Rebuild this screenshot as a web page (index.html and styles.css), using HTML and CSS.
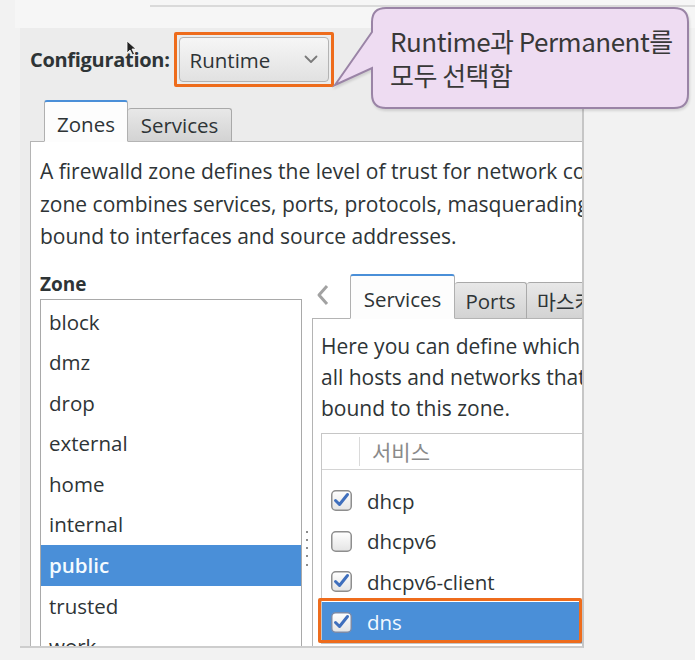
FILE: index.html
```html
<!DOCTYPE html>
<html>
<head>
<meta charset="utf-8">
<link rel="stylesheet" href="styles.css">
</head>
<body>
<div class="page">
  <div class="topstrip"><div class="topline"></div></div>
  <div class="window">
    <div class="config">
      <span class="config-label">Configuration:</span>
      <div class="hl">
        <div class="combo">
          <span>Runtime</span>
          <svg class="chev" width="14" height="9" viewBox="0 0 14 9"><path d="M1.5 1.5 L7 7 L12.5 1.5" fill="none" stroke="#7a7a7a" stroke-width="1.8" stroke-linecap="round" stroke-linejoin="round"/></svg>
        </div>
      </div>
    </div>
    <div class="tabs">
      <div class="tab active">Zones</div>
      <div class="tab">Services</div>
    </div>
    <div class="panel">
      <div class="desc">A firewalld zone defines the level of trust for network connections, interfaces and source addresses bound to the zone. The<br>zone combines services, ports, protocols, masquerading, port/packet forwarding, icmp filters and rich rules. The zone can be<br>bound to interfaces and source addresses.</div>
      <div class="lower">
        <div class="zonecol">
          <div class="zone-label">Zone</div>
          <div class="zonelist">
            <div class="zitem">block</div>
            <div class="zitem">dmz</div>
            <div class="zitem">drop</div>
            <div class="zitem">external</div>
            <div class="zitem">home</div>
            <div class="zitem">internal</div>
            <div class="zitem selected">public</div>
            <div class="zitem">trusted</div>
            <div class="zitem">work</div>
          </div>
        </div>
        <div class="handle"><i></i><i></i><i></i><i></i><i></i></div>
        <div class="rightcol">
          <div class="rtabs">
            <div class="arrow"><svg width="18" height="24" viewBox="0 0 18 24"><path d="M13 3 L5 12 L13 21" fill="none" stroke="#a2a2a2" stroke-width="3" stroke-linejoin="round"/></svg></div>
            <div class="tab active rt-services">Services</div>
            <div class="tab rt-ports">Ports</div>
            <div class="tab rt-masq">마스커레이딩</div>
          </div>
          <div class="rpanel">
            <div class="rdesc">Here you can define which services are trusted in the zone. Trusted services are accessible from<br>all hosts and networks that can reach the machine from connections, interfaces and sources<br>bound to this zone.</div>
            <div class="table">
              <div class="thead"><div class="thcheck"></div><div class="th">서비스</div></div>
              <div class="tbody">
                <div class="row">
                  <svg class="cb" width="21" height="21" viewBox="0 0 21 21"><rect x="0.75" y="0.75" width="19.5" height="19.5" rx="4" fill="url(#g)" stroke="#8e8e8e" stroke-width="1.5"/><path d="M4.5 10.5 L8.5 14.5 L16.5 4.5" fill="none" stroke="#3f6fbd" stroke-width="3" stroke-linecap="round" stroke-linejoin="round"/></svg>
                  <span>dhcp</span>
                </div>
                <div class="row">
                  <svg class="cb" width="21" height="21" viewBox="0 0 21 21"><rect x="0.75" y="0.75" width="19.5" height="19.5" rx="4" fill="url(#g)" stroke="#8e8e8e" stroke-width="1.5"/></svg>
                  <span>dhcpv6</span>
                </div>
                <div class="row">
                  <svg class="cb" width="21" height="21" viewBox="0 0 21 21"><rect x="0.75" y="0.75" width="19.5" height="19.5" rx="4" fill="url(#g)" stroke="#8e8e8e" stroke-width="1.5"/><path d="M4.5 10.5 L8.5 14.5 L16.5 4.5" fill="none" stroke="#3f6fbd" stroke-width="3" stroke-linecap="round" stroke-linejoin="round"/></svg>
                  <span>dhcpv6-client</span>
                </div>
                <div class="row selected">
                  <svg class="cb" width="21" height="21" viewBox="0 0 21 21"><rect x="0.75" y="0.75" width="19.5" height="19.5" rx="4" fill="url(#g)" stroke="#7a8aa8" stroke-width="1.5"/><path d="M4.5 10.5 L8.5 14.5 L16.5 4.5" fill="none" stroke="#3f6fbd" stroke-width="3" stroke-linecap="round" stroke-linejoin="round"/></svg>
                  <span>dns</span>
                </div>
              </div>
            </div>
          </div>
        </div>
      </div>
    </div>
  </div>
  <svg class="defs" width="0" height="0"><defs><linearGradient id="g" x1="0" y1="0" x2="0" y2="1"><stop offset="0" stop-color="#ffffff"/><stop offset="1" stop-color="#e4e4e4"/></linearGradient></defs></svg>
  <svg class="callout" width="365" height="112" viewBox="0 0 365 112"><path d="M56 3 H344 Q358 3 358 17 V89 Q358 103 344 103 H56 Q42 103 42 89 V63 L5 80 L42 27 V17 Q42 3 56 3 Z" fill="#eedcf2" stroke="#9a84a6" stroke-width="2"/></svg>
  <div class="callout-text">Runtime과 Permanent를<br>모두 선택함</div>
  <svg class="cursor" width="12" height="16" viewBox="0 0 12 16"><path d="M1 1 L1 13 L4 10 L6.5 15 L8.5 14 L6 9 L10 9 Z" fill="#222" stroke="#fff" stroke-width="0.8"/></svg>
</div>
</body>
</html>
```
FILE: styles.css
```css
* { box-sizing: border-box; }
html, body { margin: 0; padding: 0; }
body {
  background: #f2f2f2;
  font-family: "Open Sans", "Noto Sans", "Noto Sans CJK KR", sans-serif;
  color: #2e3436;
}
.page {
  position: relative;
  width: 695px;
  height: 660px;
  overflow: hidden;
  background: #f2f2f2;
}
.topstrip {
  height: 28px;
  margin-left: 15px;
  background: #f6f6f6;
  padding-top: 5px;
}
.topline {
  margin-left: 135px;
  height: 2px;
  background: #dadada;
}
.window {
  margin-left: 20px;
  width: 564px;
  height: 620px;
  background: #ececec;
  border-right: 2px solid #c6c6c6;
  border-bottom: 2px solid #cdcdcd;
  display: flex;
  flex-direction: column;
  overflow: hidden;
}
.config {
  height: 72px;
  flex: none;
  display: flex;
  align-items: flex-start;
  padding: 4px 0 0 10px;
}
.config-label {
  font-weight: 700;
  font-size: 20px;
  line-height: 55px;
  margin-right: 4px;
  letter-spacing: -0.3px;
  white-space: nowrap;
}
.hl {
  border: 3px solid #ee6c1c;
  border-radius: 2px;
  padding: 2px;
  flex: none;
}
.combo {
  width: 150px;
  height: 45px;
  border: 1px solid #b3b3b3;
  border-radius: 4px;
  background: linear-gradient(#f6f6f6, #e1e1e1);
  display: flex;
  align-items: center;
  justify-content: space-between;
  padding: 0 10px 0 10px;
  font-size: 20.5px;
}
.tabs {
  height: 42px;
  flex: none;
  display: flex;
  align-items: flex-end;
  padding-left: 24px;
  margin-bottom: -1px;
  position: relative;
  z-index: 1;
}
.tab {
  display: flex;
  align-items: center;
  justify-content: center;
  font-size: 20.5px;
  height: 34px;
  border: 1px solid #a9a9a9;
  border-bottom: 1px solid #b4b4b4;
  border-radius: 3px 3px 0 0;
  background: linear-gradient(#e8e8e8, #d3d3d3);
  white-space: nowrap;
  overflow: hidden;
}
.tab.active {
  height: 42px;
  background: #fdfdfd;
  border-color: #b0b0b0;
  border-top: 2px solid #4a8fd8;
  border-bottom: 1px solid #fdfdfd;
  padding-top: 4px;
}
.tabs .tab:nth-child(1) { width: 84px; }
.tabs .tab:nth-child(2) { width: 104px; border-left: none; }
.panel {
  margin-left: 10px;
  flex: 1;
  min-height: 0;
  background: #fff;
  border-top: 1px solid #b4b4b4;
  border-left: 1px solid #b4b4b4;
  overflow: hidden;
}
.desc {
  padding: 13px 0 0 9px;
  font-size: 21px;
  line-height: 32.5px;
  white-space: nowrap;
}
.lower {
  display: flex;
  margin-top: 16px;
}
.zonecol {
  margin-left: 9px;
  width: 262px;
  flex: none;
}
.zone-label {
  font-weight: 700;
  font-size: 19px;
  line-height: 30px;
  height: 30px;
}
.zonelist {
  border: 1px solid #a9a9a9;
  background: #fff;
  padding-top: 2px;
  height: 420px;
}
.zitem {
  height: 40.6px;
  line-height: 40.6px;
  padding-left: 8px;
  font-size: 20.5px;
}
.zitem.selected {
  background: #4a8fd8;
  color: #f4fbff;
  font-weight: 600;
}
.handle {
  width: 10px;
  flex: none;
  display: flex;
  flex-direction: column;
  align-items: center;
  padding-top: 262px;
  gap: 6.3px;
}
.handle i {
  display: block;
  width: 2px;
  height: 2px;
  background: #666;
  border-radius: 1px;
}
.rightcol {
  flex: 1;
  min-width: 0;
  padding-top: 5.5px;
  display: flex;
  flex-direction: column;
}
.rtabs {
  height: 45px;
  display: flex;
  align-items: flex-end;
  margin-bottom: -1px;
  position: relative;
  z-index: 1;
}
.arrow {
  width: 38px;
  flex: none;
  align-self: flex-start;
  margin-top: 9px;
  padding-left: 2px;
}
.arrow svg { display: block; }
.rtabs .tab { height: 37px; flex: none; }
.rtabs .tab.active { height: 45px; }
.rt-services { width: 105px; }
.rt-ports { width: 72px; border-left: none; }
.rt-masq { width: 80px; border-left: none; justify-content: flex-start; padding-left: 10px; }
.rpanel {
  flex: 1;
  background: #fff;
  border-top: 1px solid #b4b4b4;
  border-left: 1px solid #b4b4b4;
  height: 340px;
  overflow: hidden;
}
.rdesc {
  padding: 12px 0 0 8px;
  font-size: 21px;
  line-height: 31px;
  white-space: nowrap;
}
.table {
  margin: 8.5px 0 0 8px;
  border: 1px solid #c6c6c6;
  border-right: none;
  background: #fff;
}
.thead {
  height: 36px;
  display: flex;
  align-items: stretch;
  border-bottom: 1px solid #d4d4d4;
}
.thcheck {
  width: 38px;
  margin: 3px 0;
  border-right: 1px solid #dadada;
}
.th {
  display: flex;
  align-items: center;
  padding-left: 12px;
  color: #8a8a8a;
  font-size: 21px;
  font-family: "Noto Sans CJK KR", sans-serif;
}
.tbody { padding-top: 11px; }
.row {
  height: 40.5px;
  display: flex;
  align-items: center;
  padding-left: 9px;
  font-size: 20.5px;
  position: relative;
  white-space: nowrap;
}
.cb { flex: none; margin-right: 15px; display: block; }
.row.selected {
  background: #4a8fd8;
  color: #f2f8ff;
}
.row.selected::after {
  content: "";
  position: absolute;
  left: -4px;
  top: -4px;
  right: 0;
  bottom: 0;
  border: 3px solid #ee6c1c;
  border-radius: 2px;
}
.defs { position: absolute; }
.callout {
  position: absolute;
  left: 330px;
  top: 5px;
  filter: drop-shadow(1px 2px 1px rgba(0,0,0,0.12));
}
.callout-text {
  position: absolute;
  left: 390px;
  top: 24px;
  font-family: "Noto Sans CJK KR", sans-serif;
  font-size: 26px;
  line-height: 34px;
  color: #383838;
  letter-spacing: -0.5px;
  white-space: nowrap;
}
.cursor {
  position: absolute;
  left: 126px;
  top: 40px;
}
```
